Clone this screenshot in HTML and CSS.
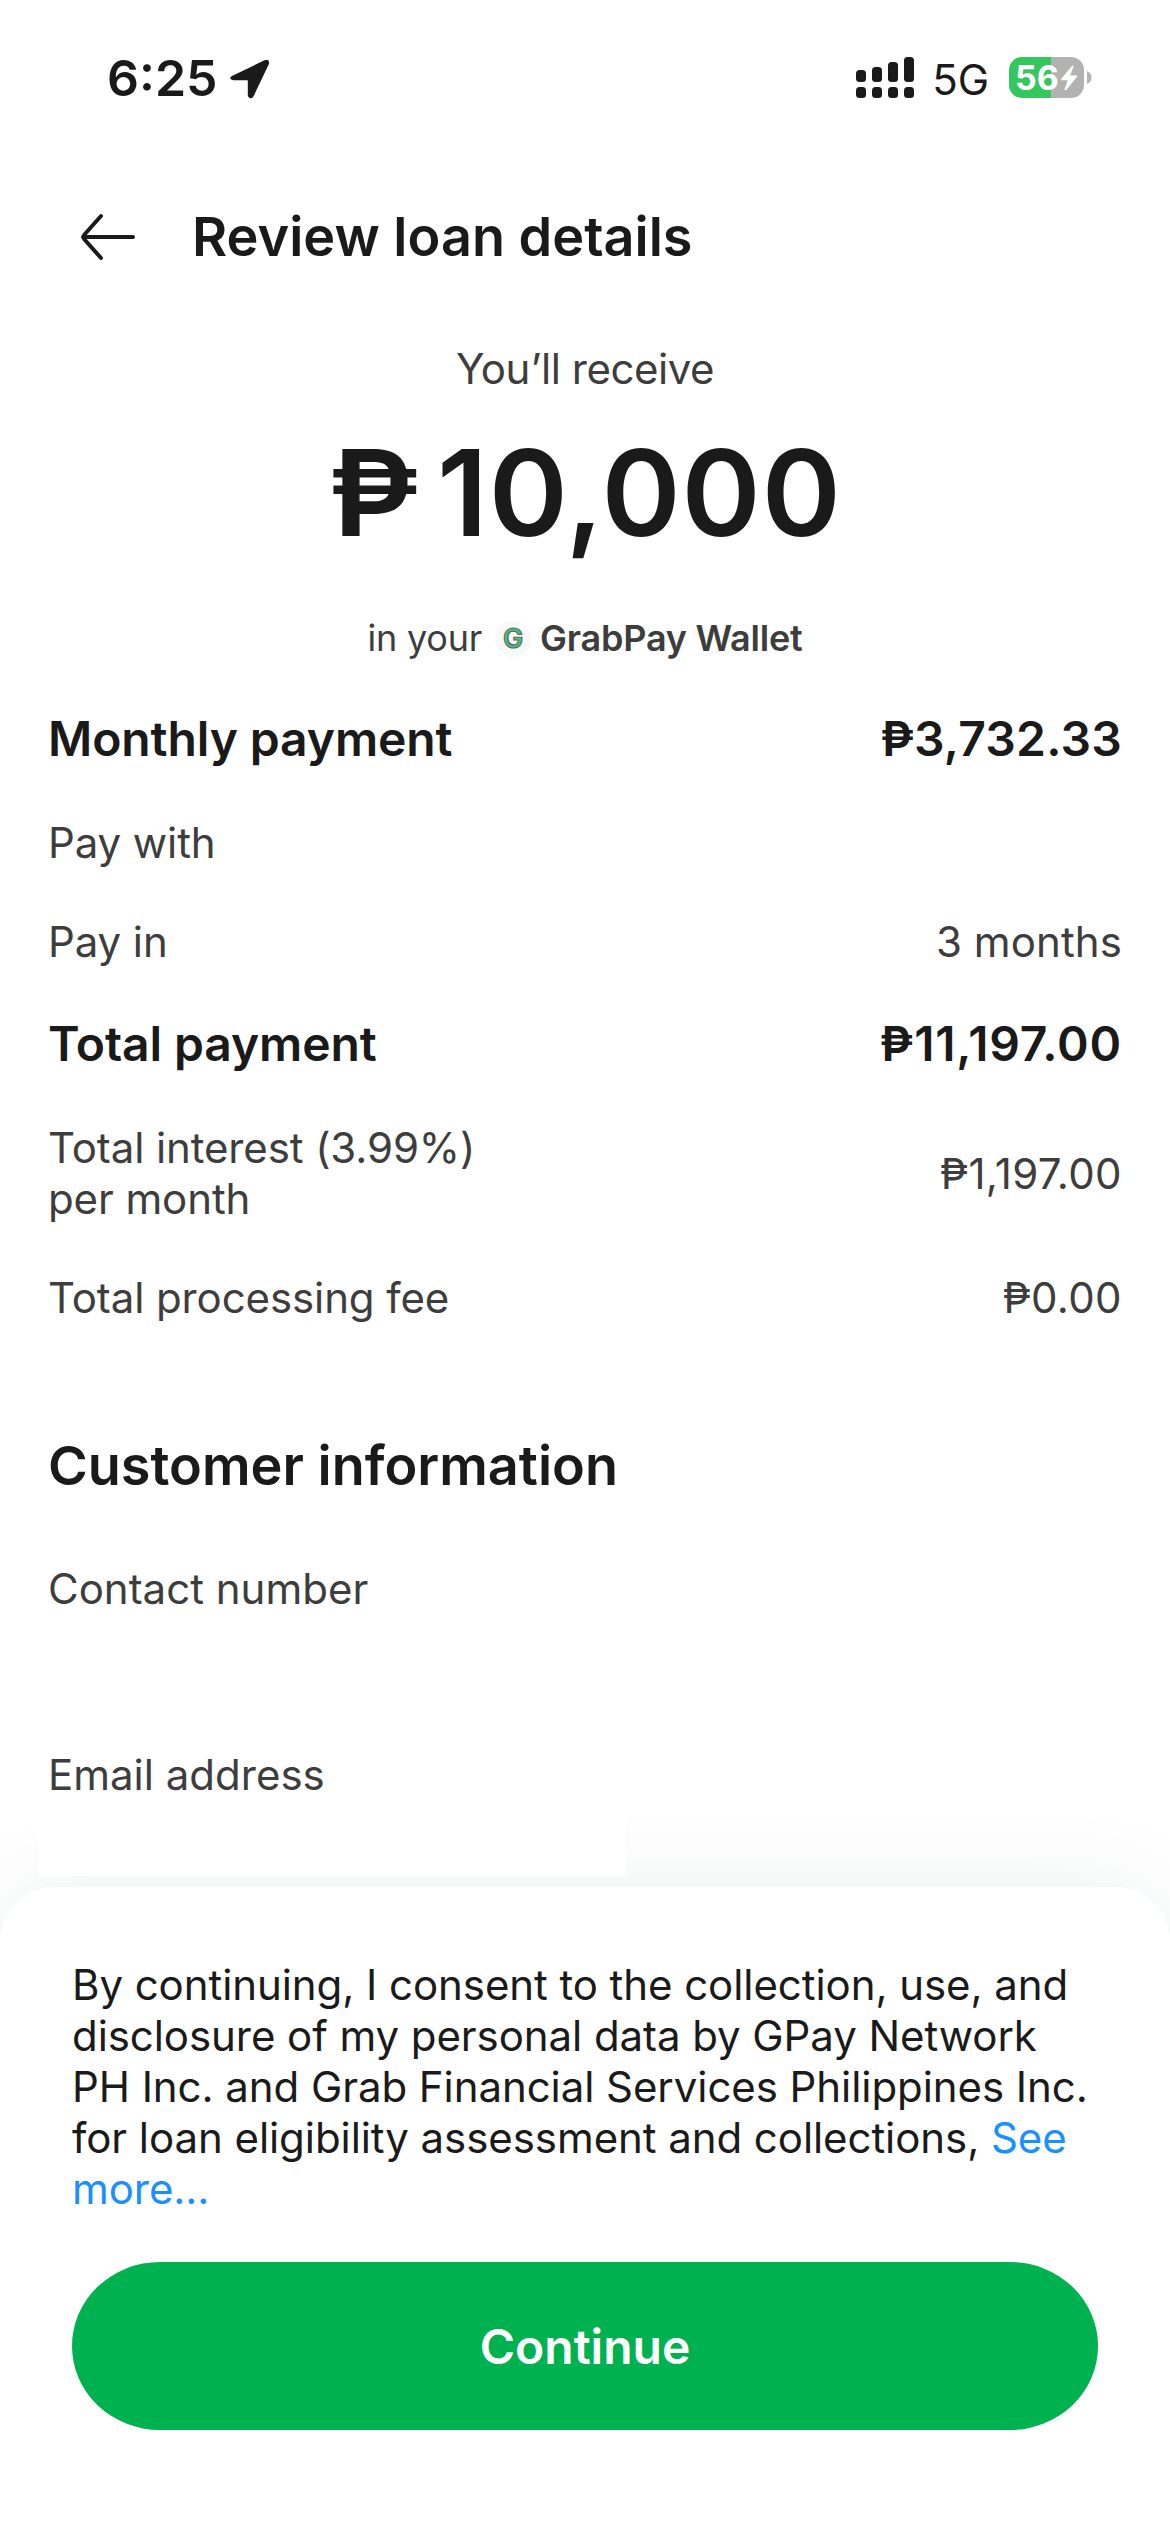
FILE: index.html
```
<!DOCTYPE html>
<html lang="en">
<head>
  <meta charset="UTF-8">
  <meta name="viewport" content="width=device-width, initial-scale=1.0">
  <title>Review loan details</title>
  <link rel="stylesheet" href="styles.css">
</head>
<body>
  <div class="screen">
    <div class="status-bar">
      <span class="time">6:25</span>
      <svg class="location" width="40" height="40" viewBox="0 0 40 40">
        <path d="M3 16.5 L34.5 1.3 Q40 -0.5 38.9 5 L23.7 37 Q22.5 39.8 20 39.2 Q17.8 38.7 17.8 36 L17.8 21.3 L3.4 21.3 Q0.5 21 0.2 19 Q0 17.7 3 16.5 Z" fill="#1a1a1a"/>
      </svg>
      <svg class="signal" width="58" height="41" viewBox="0 0 58 41" fill="#1a1a1a">
        <rect x="0" y="13" width="10" height="12" rx="3.5"/>
        <rect x="16" y="10" width="10" height="15" rx="3.5"/>
        <rect x="32" y="5" width="10" height="20" rx="3.5"/>
        <rect x="48" y="0" width="10" height="25" rx="3.5"/>
        <rect x="0" y="30" width="10" height="11" rx="3.5"/>
        <rect x="16" y="30" width="10" height="11" rx="3.5"/>
        <rect x="32" y="30" width="10" height="11" rx="3.5"/>
        <rect x="48" y="30" width="10" height="11" rx="3.5"/>
      </svg>
      <span class="network">5G</span>
      <div class="battery">
        <span>56</span>
        <svg width="18" height="26" viewBox="0 0 18 26">
          <path d="M12 1 L1 14 Q0.4 15.2 1.5 15.2 L7.8 15.2 L4.6 24 Q4.8 25.8 6.3 24.9 L17 11.8 Q17.6 10.6 16.3 10.5 L10.3 10.5 L13.4 1.6 Q13.2 0 12 1 Z" fill="#fff"/>
        </svg>
      </div>
      <svg class="nub" width="5" height="13" viewBox="0 0 5 13">
        <path d="M0 0 Q4.5 2 4.5 6.5 Q4.5 11 0 13 Z" fill="#b2b2b2"/>
      </svg>
    </div>

    <header class="header">
      <svg width="56" height="48" viewBox="0 0 56 48" fill="none" stroke="#1a1a1a" stroke-width="4" stroke-linecap="round" stroke-linejoin="round">
        <path d="M53 24 H3 M21 3 L4.5 21.5 Q2.5 24 4.5 26.5 L21 45"/>
      </svg>
      <h1>Review loan details</h1>
    </header>

    <section class="receive">
      <p class="label">You’ll receive</p>
      <p class="amount"><span class="peso">₱</span><span>10,000</span></p>
      <p class="wallet">
        <span class="in-your">in your</span>
        <span class="logo">G</span>
        <strong>GrabPay Wallet</strong>
      </p>
    </section>

    <section class="details">
      <div class="row total"><span>Monthly payment</span><span class="monthly">₱3,732.33</span></div>
      <div class="row"><span>Pay with</span></div>
      <div class="row"><span>Pay in</span><span class="months">3 months</span></div>
      <div class="row total"><span>Total payment</span><span class="sum">₱11,197.00</span></div>
      <div class="row"><span>Total interest (3.99%)<br>per month</span><span class="value">₱1,197.00</span></div>
      <div class="row"><span>Total processing fee</span><span class="value">₱0.00</span></div>
    </section>

    <section class="customer">
      <h2>Customer information</h2>
      <p class="contact">Contact number</p>
      <p>Email address</p>
      <div class="email-value"></div>
    </section>

    <footer class="sheet">
      <p>By continuing, I consent to the collection, use, and disclosure of my personal data by GPay Network PH&nbsp;Inc. and Grab Financial Services Philippines Inc. for loan eligibility assessment and collections, <a>See more...</a></p>
      <button type="button">Continue</button>
    </footer>
  </div>
</body>
</html>
```
FILE: styles.css
```
* { box-sizing: border-box; }
body {
  margin: 0; background: #fff; color: #3d3d3d;
  font-family: Inter, "Liberation Sans", sans-serif;
  font-size: 42px; line-height: 51px;
}
h1, h2, p { margin: 0; }
.screen {
  width: 1170px; height: 2532px; overflow: hidden;
  display: flex; flex-direction: column;
}

/* status bar */
.status-bar {
  height: 155px; padding: 0 78px 0 107px;
  display: flex; align-items: center; color: #1a1a1a;
}
.time { font-size: 50px; font-weight: 600; margin-top: 1px; }
.location { margin-left: 12px; margin-top: 2px; }
.signal { margin-left: auto; }
.network { margin-left: 18px; margin-top: 3px; }
.battery {
  width: 75px; height: 41px; margin-left: 20px; border-radius: 13px;
  background: linear-gradient(90deg, #34c75e 42px, #b2b2b2 42px);
  display: flex; align-items: center; padding-left: 6px; gap: 1px;
  color: #fff; font-size: 34px; font-weight: 700; line-height: 41px;
}
.nub { margin-left: 3px; }

/* page title */
.header {
  height: 164px; padding-left: 80px;
  display: flex; align-items: center; gap: 56px;
}
h1, h2 { color: #1a1a1a; font-size: 54px; font-weight: 600; line-height: 66px; }

.receive { padding-top: 24px; text-align: center; }
.label { letter-spacing: -0.45px; }
.amount {
  display: flex; justify-content: center; gap: 20px;
  margin-top: 24px; padding-left: 4px; color: #1a1a1a;
  font-size: 120px; font-weight: 600; line-height: 150px; letter-spacing: 1px;
}
.peso { transform: scaleX(1.09); }
.wallet {
  display: flex; align-items: center; justify-content: center;
  margin-top: 48px; font-size: 36px; line-height: 45px; letter-spacing: -0.22px;
}
.wallet strong { font-weight: 600; }
.logo {
  width: 36px; height: 36px; margin: 0 9px 0 13px; border-radius: 50%;
  background: #f5f9f7; color: #3fc880; -webkit-text-stroke: 1.2px #666;
  font-size: 27px; font-weight: 600; line-height: 36px; text-align: center;
}

/* loan breakdown */
.details { padding: 49px 48px 0; }
.row {
  display: flex; justify-content: space-between; align-items: center;
  margin-bottom: 48px; letter-spacing: -0.1px;
}
.total { margin-top: -1px; color: #1a1a1a; font-size: 48px; font-weight: 600; line-height: 60px; }
.monthly { letter-spacing: 0.2px; }
.sum { letter-spacing: 0.8px; }
.months { letter-spacing: 0.1px; }
.value { letter-spacing: 0.4px; }

.customer { padding: 62px 48px 0; }
.contact { margin: 64px 0 135px; }
/* sits above the shadow of the bottom sheet */
.email-value {
  position: relative; z-index: 1;
  width: 588px; height: 61px; margin: 15px 0 0 -10px; background: #fff;
}

/* consent sheet */
.sheet {
  height: 645px; margin-top: auto; padding: 72px 72px 0;
  background: #fff; color: #1a1a1a; border-radius: 54px 54px 0 0;
  box-shadow: 0 0 90px rgba(20, 80, 50, 0.075);
}
.sheet p { letter-spacing: -0.07px; }
.sheet a { color: #1a90ff; }
.sheet button {
  display: block; width: 100%; height: 168px; margin-top: 48px;
  border: none; border-radius: 88px / 84px; background: #00b14f; color: #fff;
  font-family: inherit; font-size: 48px; font-weight: 600;
}
```
